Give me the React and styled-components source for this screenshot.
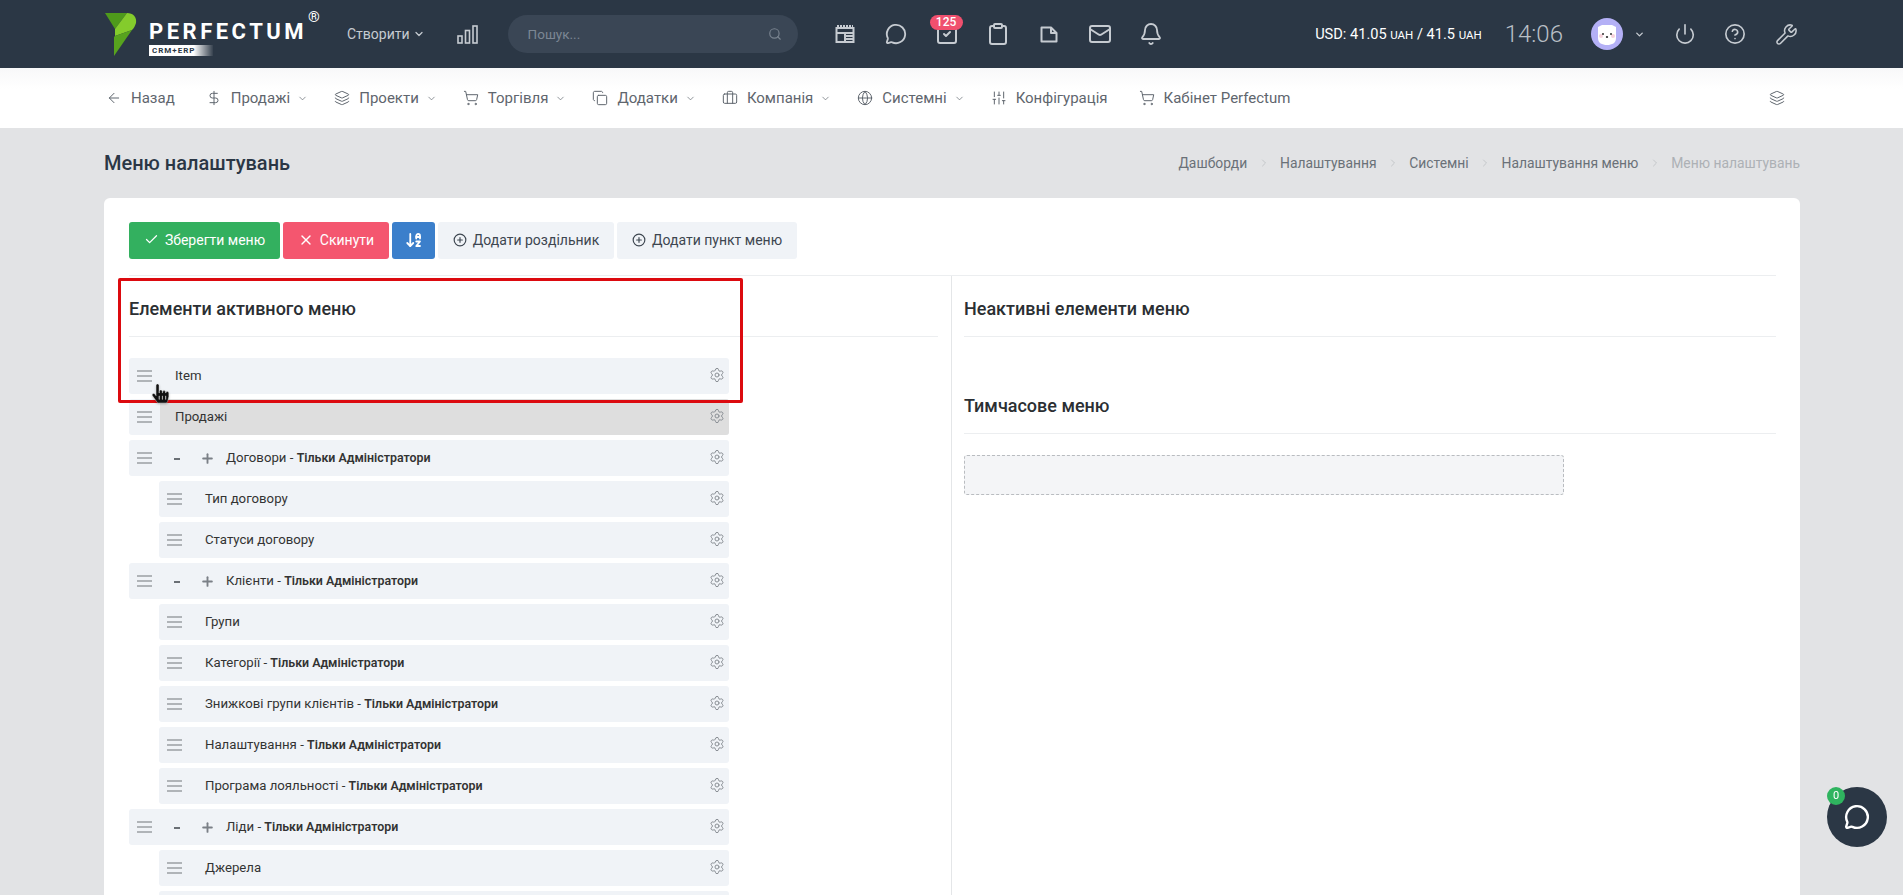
import React from 'react';
import styled, { createGlobalStyle } from 'styled-components';
import {
  ArrowDownAZ, ArrowLeft, Bell, Briefcase, Check, ChevronDown, ChevronRight, CircleHelp, CirclePlus,
  Clipboard, Copy, DollarSign, Globe, Layers, Mail, MessageCircle, Plus, Power, Search, Settings,
  ShoppingCart, SlidersVertical, SquareCheck, Wrench, X,
} from 'lucide-react';
import { FaHandPointer } from 'react-icons/fa';

const GlobalStyle = createGlobalStyle`
  html, body {
    margin: 0;
    height: 100%;
    overflow: hidden;
    background: #e2e3e5;
    font-family: Roboto, "Liberation Sans", sans-serif;
    color: #333;
  }
  * { box-sizing: border-box; }
`;

const Page = styled.div`
  height: 895px;
  display: flex;
  flex-direction: column;
  overflow: hidden;
`;

/* top bar */
const TopBar = styled.header`
  height: 68px;
  flex: none;
  background: #2b3745;
  display: flex;
  align-items: center;
  padding: 0 105px;
  color: #c6cbd1;
`;
const Brand = styled.div`
  width: 215px;
  display: flex;
  gap: 12px;
`;
const Wordmark = styled.div`
  position: relative;
  padding-top: 8px;
  color: #fff;
  font-weight: 700;
  font-size: 22px;
  line-height: 21px;
  letter-spacing: 3.5px;
`;
const Reg = styled.span`
  position: absolute;
  top: -4px;
  left: 159px;
  font-size: 15px;
  line-height: 16px;
  font-weight: 400;
  letter-spacing: 0;
`;
const Tag = styled.div`
  width: 64px;
  height: 11px;
  margin-top: 3px;
  padding-left: 3px;
  background: linear-gradient(90deg, #fff 70%, rgba(255, 255, 255, 0.05) 100%);
  color: #2b3745;
  font-size: 8px;
  line-height: 11px;
  letter-spacing: 1px;
`;
const CreateLink = styled.div`
  margin-left: 27px;
  display: flex;
  align-items: center;
  gap: 3px;
  font-size: 14px;
`;
const StatsIcon = styled.svg`
  margin-left: 32px;
  flex: none;
`;
const SearchBox = styled.div`
  margin-left: 30px;
  width: 290px;
  height: 38px;
  border-radius: 19px;
  background: #3a4655;
  display: flex;
  align-items: center;
  justify-content: space-between;
  padding: 0 16px 0 20px;
  font-size: 13.5px;
  color: #7c8794;
`;
const HeadIcons = styled.div`
  margin-left: 37px;
  display: flex;
  gap: 31px;
`;
const HeadIcon = styled.div`
  position: relative;
  width: 20px;
  height: 20px;
  display: flex;
  align-items: center;
  justify-content: center;
  svg { flex: none; }
`;
const CountBadge = styled.span`
  position: absolute;
  top: -9px;
  left: -7px;
  width: 33px;
  height: 15px;
  border-radius: 8px;
  background: #f0506e;
  color: #fff;
  font-size: 12px;
  line-height: 15px;
  font-weight: 500;
  text-align: center;
`;
const HeadRight = styled.div`
  margin-left: auto;
  display: flex;
  align-items: center;
`;
const Rate = styled.div`
  color: #fff;
  font-size: 14.6px;
  small { font-size: 11.5px; }
`;
const Clock = styled.div`
  margin-left: 23px;
  font-size: 24px;
  font-weight: 300;
  color: #b9bfc6;
`;
const AvatarWrap = styled.svg`
  margin-left: 28px;
  flex: none;
`;
const HeadTool = styled.div`
  margin-left: ${(p) => p.$gap}px;
  display: flex;
`;

/* nav */
const Nav = styled.nav`
  height: 60px;
  flex: none;
  background: linear-gradient(#f8f8f9, #fff 35%);
  display: flex;
  align-items: center;
  padding: 0 118px 0 106px;
  color: #5f666e;
`;
const NavItem = styled.a`
  display: flex;
  align-items: center;
  gap: 9px;
  margin-right: ${(p) => p.$gap}px;
  font-size: 15px;
  svg { flex: none; }
`;
const Caret = styled(ChevronDown)`
  margin-left: -2px;
`;
const NavEnd = styled.div`
  margin-left: auto;
  display: flex;
`;

/* page head */
const Main = styled.main`
  flex: 1;
  min-height: 0;
  display: flex;
  flex-direction: column;
  padding: 0 103px 0 104px;
`;
const PageHead = styled.div`
  height: 70px;
  flex: none;
  display: flex;
  align-items: center;
  justify-content: space-between;
`;
const PageTitle = styled.h1`
  margin: 0;
  font-size: 20px;
  font-weight: 500;
  color: #2b3745;
`;
const Crumbs = styled.div`
  display: flex;
  align-items: center;
  gap: 10.4px;
  font-size: 13.87px;
  color: #6a7178;
`;
const Crumb = styled.span`
  color: ${(p) => (p.$last ? '#adb1b5' : '#6a7178')};
`;

/* card */
const Card = styled.section`
  flex: 1;
  min-height: 0;
  background: #fff;
  border-radius: 6px 6px 0 0;
  padding: 24px 24px 0 25px;
  display: flex;
  flex-direction: column;
`;
const Toolbar = styled.div`
  flex: none;
  display: flex;
  gap: 3px;
  padding-bottom: 16px;
  border-bottom: 1px solid #eceef0;
`;
const Btn = styled.button`
  height: 37px;
  width: ${(p) => p.$w}px;
  border: 0;
  border-radius: 3px;
  display: flex;
  align-items: center;
  justify-content: center;
  gap: 6px;
  padding: 0 0 2px;
  font-family: inherit;
  font-size: 14px;
  background: ${(p) => p.$bg || '#f0f3f7'};
  color: ${(p) => p.$fg || '#3d4650'};
`;
const Columns = styled.div`
  flex: 1;
  min-height: 0;
  display: grid;
  grid-template-columns: 823px 1fr;
`;
const LeftCol = styled.div`
  position: relative;
  padding-right: 13px;
  border-right: 1px solid #e4e6e8;
`;
const RightCol = styled.div`
  padding-left: 12px;
`;
const ColHead = styled.div`
  height: 61px;
  padding-top: 5px;
  margin-top: ${(p) => p.$top || 0}px;
  display: flex;
  align-items: center;
  border-bottom: 1px solid #eceef0;
`;
const ColTitle = styled.h4`
  margin: 0;
  font-size: 18px;
  font-weight: 500;
  color: #2b2f33;
`;
const List = styled.div`
  margin-top: 21px;
  display: flex;
  flex-direction: column;
  gap: 5px;
`;
const Row = styled.div`
  width: ${(p) => (p.$child ? 570 : 600)}px;
  margin-left: ${(p) => (p.$child ? 30 : 0)}px;
  height: 36px;
  flex: none;
  display: flex;
  border-radius: 3px;
  background: #f0f3f7;
  overflow: hidden;
  font-size: 13.2px;
  color: #333;
`;
const HandleCell = styled.div`
  width: 31px;
  flex: none;
  display: flex;
  align-items: center;
  padding-left: 8px;
`;
const RowBody = styled.div`
  flex: 1;
  display: flex;
  align-items: center;
  padding: 0 4px 2px ${(p) => (p.$open ? 14 : 15)}px;
  background: ${(p) => (p.$drag ? '#dedede' : 'transparent')};
`;
const Minus = styled.span`
  width: 6px;
  height: 2px;
  background: #6a6f75;
  margin-top: 4px;
`;
const Label = styled.span`
  flex: 1;
  margin-left: ${(p) => p.$gap || 0}px;
  b {
    font-size: 12.4px;
    font-weight: 600;
  }
`;
const PlusIcon = styled(Plus)`
  margin: 2px 0 0 20px;
  flex: none;
`;
const DropZone = styled.div`
  margin-top: 21px;
  width: 600px;
  height: 40px;
  background: #f4f5f7;
  border: 1px dashed #b9bcc0;
  border-radius: 3px;
`;

/* overlays */
const Highlight = styled.div`
  position: absolute;
  left: -11px;
  top: 2px;
  width: 625px;
  height: 125px;
  border: 3px solid #dc0a0f;
  border-radius: 2px;
`;
const Pointer = styled(FaHandPointer)`
  position: absolute;
  left: 22px;
  top: 108px;
  color: #111;
  stroke: #fff;
  stroke-width: 10px;
  filter: drop-shadow(0 1px 1px rgba(0, 0, 0, 0.25));
`;
const ChatFab = styled.div`
  position: fixed;
  left: 1827px;
  top: 787px;
  width: 60px;
  height: 60px;
  border-radius: 50%;
  background: #2b3745;
  color: #fff;
  display: flex;
  align-items: center;
  justify-content: center;
`;
const ChatBadge = styled.span`
  position: absolute;
  left: 0;
  top: 0;
  width: 18px;
  height: 18px;
  border-radius: 50%;
  background: #2fb45f;
  color: #fff;
  font-size: 11px;
  line-height: 18px;
  text-align: center;
`;

const Logo = () => (
  <svg width="32" height="43" viewBox="0 0 32 43">
    <path d="M0 0H22L10 16Z" fill="#4e9a1b" />
    <path d="M22 0C28 0 32 4 31 10C30 13 29 15 27 17L10 23V16Z" fill="#84cc2c" />
    <path d="M10 23L27 17L9 43V24Z" fill="#57a31e" />
  </svg>
);

const Handle = () => (
  <svg width="15" height="12" viewBox="0 0 15 12" fill="#b0b4b8">
    <rect y="0" width="15" height="2" />
    <rect y="5" width="15" height="2" />
    <rect y="10" width="15" height="2" />
  </svg>
);

const LayoutIcon = () => (
  <svg width="20" height="20" viewBox="0 0 20 20" fill="none" stroke="currentColor" strokeWidth="2">
    <rect x="1.5" y="4" width="17" height="14" />
    <path d="M1.5 9H18.5M10 9V18M11 12H18M11 15H18" />
    <path d="M2 2H18" strokeDasharray="2 1" />
  </svg>
);

const FileIcon = () => (
  <svg width="18" height="17" viewBox="0 0 18 17" fill="none" stroke="currentColor" strokeWidth="2" strokeLinejoin="round">
    <path d="M1.5 1.5H11L16.5 7V15.5H1.5Z" />
    <path d="M11 1.5V7H16.5" />
  </svg>
);

const navItems = [
  { icon: ArrowLeft, text: 'Назад', gap: 31 },
  { icon: DollarSign, text: 'Продажі', caret: true, gap: 26 },
  { icon: Layers, text: 'Проекти', caret: true, gap: 26 },
  { icon: ShoppingCart, text: 'Торгівля', caret: true, gap: 26 },
  { icon: Copy, text: 'Додатки', caret: true, gap: 26 },
  { icon: Briefcase, text: 'Компанія', caret: true, gap: 26 },
  { icon: Globe, text: 'Системні', caret: true, gap: 26 },
  { icon: SlidersVertical, text: 'Конфігурація', gap: 31 },
  { icon: ShoppingCart, text: 'Кабінет Perfectum', gap: 0 },
];

const crumbs = ['Дашборди', 'Налаштування', 'Системні', 'Налаштування меню', 'Меню налаштувань'];

const rows = [
  { id: 1, text: 'Договори', admin: true, open: true },
  { id: 2, text: 'Тип договору', child: true },
  { id: 3, text: 'Статуси договору', child: true },
  { id: 4, text: 'Клієнти', admin: true, open: true },
  { id: 5, text: 'Групи', child: true },
  { id: 6, text: 'Категорії', admin: true, child: true },
  { id: 7, text: 'Знижкові групи клієнтів', admin: true, child: true },
  { id: 8, text: 'Налаштування', admin: true, child: true },
  { id: 9, text: 'Програма лояльності', admin: true, child: true },
  { id: 10, text: 'Ліди', admin: true, open: true },
  { id: 11, text: 'Джерела', child: true },
  { id: 12, text: '', child: true },
];

const MenuRow = ({ text, admin, open, child, drag }) => (
  <Row $child={child}>
    <HandleCell><Handle /></HandleCell>
    <RowBody $drag={drag} $open={open}>
      {open && <Minus />}
      {open && <PlusIcon size={15} strokeWidth={3} color="#7b8087" />}
      <Label $gap={open ? 11 : 0}>
        {text}
        {admin && <> - <b>Тільки Адміністратори</b></>}
      </Label>
      <Settings size={16} color="#8a8f95" strokeWidth={1.5} />
    </RowBody>
  </Row>
);

export default function App() {
  return (
    <Page>
      <GlobalStyle />
      <TopBar>
        <Brand>
          <Logo />
          <Wordmark>
            PERFECTUM
            <Reg>®</Reg>
            <Tag>CRM+ERP</Tag>
          </Wordmark>
        </Brand>
        <CreateLink>Створити <ChevronDown size={12} strokeWidth={2.5} /></CreateLink>
        <StatsIcon width="21" height="19" viewBox="0 0 21 19" fill="none" stroke="#c6cbd1" strokeWidth="1.6">
          <rect x="1" y="11" width="4" height="7" />
          <rect x="8.5" y="5.5" width="4" height="12.5" />
          <rect x="16" y="1" width="4" height="17" />
        </StatsIcon>
        <SearchBox>
          Пошук...
          <Search size={14} color="#79838f" />
        </SearchBox>
        <HeadIcons>
          <HeadIcon><LayoutIcon /></HeadIcon>
          <HeadIcon><MessageCircle size={22} strokeWidth={2} /></HeadIcon>
          <HeadIcon>
            <SquareCheck size={24} strokeWidth={2} />
            <CountBadge>125</CountBadge>
          </HeadIcon>
          <HeadIcon><Clipboard size={24} strokeWidth={2} /></HeadIcon>
          <HeadIcon><FileIcon /></HeadIcon>
          <HeadIcon><Mail size={24} strokeWidth={2} /></HeadIcon>
          <HeadIcon><Bell size={24} strokeWidth={1.8} /></HeadIcon>
        </HeadIcons>
        <HeadRight>
          <Rate>USD: 41.05 <small>UAH</small> / 41.5 <small>UAH</small></Rate>
          <Clock>14:06</Clock>
          <AvatarWrap width="32" height="32" viewBox="0 0 32 32">
            <circle cx="16" cy="16" r="16" fill="#b4b0f6" />
            <path d="M7 9L11 7H21L25 9L25 20C25 25 21 27 16 27C11 27 7 25 7 20Z" fill="#fff" />
            <circle cx="10" cy="18" r="2" fill="#f7d3dc" />
            <circle cx="22" cy="18" r="2" fill="#f7d3dc" />
            <circle cx="12" cy="16" r="1" fill="#333" />
            <circle cx="20" cy="16" r="1" fill="#333" />
            <ellipse cx="16" cy="19" rx="1.2" ry="1" fill="#333" />
          </AvatarWrap>
          <HeadTool $gap={11}><ChevronDown size={11} strokeWidth={3} /></HeadTool>
          <HeadTool $gap={29}><Power size={22} strokeWidth={1.8} /></HeadTool>
          <HeadTool $gap={28}><CircleHelp size={22} strokeWidth={1.8} /></HeadTool>
          <HeadTool $gap={29}><Wrench size={23} strokeWidth={1.6} /></HeadTool>
        </HeadRight>
      </TopBar>

      <Nav>
        {navItems.map((item) => (
          <NavItem key={item.text} $gap={item.gap}>
            <item.icon size={16} strokeWidth={1.5} />
            {item.text}
            {item.caret && <Caret size={11} strokeWidth={1.5} />}
          </NavItem>
        ))}
        <NavEnd><Layers size={16} strokeWidth={1.5} /></NavEnd>
      </Nav>

      <Main>
        <PageHead>
          <PageTitle>Меню налаштувань</PageTitle>
          <Crumbs>
            {crumbs.map((c, i) => (
              <React.Fragment key={c}>
                {i > 0 && <ChevronRight size={12} color="#c4c7ca" />}
                <Crumb $last={i === crumbs.length - 1}>{c}</Crumb>
              </React.Fragment>
            ))}
          </Crumbs>
        </PageHead>

        <Card>
          <Toolbar>
            <Btn $w={151} $bg="#33b05f" $fg="#fff"><Check size={15} />Зберегти меню</Btn>
            <Btn $w={106} $bg="#f4566f" $fg="#fff"><X size={16} />Скинути</Btn>
            <Btn $w={43} $bg="#3b7fcb" $fg="#fff"><ArrowDownAZ size={18} strokeWidth={2.4} /></Btn>
            <Btn $w={176}><CirclePlus size={14} />Додати роздільник</Btn>
            <Btn $w={180}><CirclePlus size={14} />Додати пункт меню</Btn>
          </Toolbar>
          <Columns>
            <LeftCol>
              <ColHead><ColTitle>Елементи активного меню</ColTitle></ColHead>
              <List>
                <MenuRow text="Item" />
                <MenuRow text="Продажі" drag />
                {rows.map((r) => <MenuRow key={r.id} {...r} />)}
              </List>
              <Highlight />
              <Pointer size={19} />
            </LeftCol>
            <RightCol>
              <ColHead><ColTitle>Неактивні елементи меню</ColTitle></ColHead>
              <ColHead $top={36}><ColTitle>Тимчасове меню</ColTitle></ColHead>
              <DropZone />
            </RightCol>
          </Columns>
        </Card>
      </Main>

      <ChatFab>
        <MessageCircle size={26} strokeWidth={2.2} />
        <ChatBadge>0</ChatBadge>
      </ChatFab>
    </Page>
  );
}
